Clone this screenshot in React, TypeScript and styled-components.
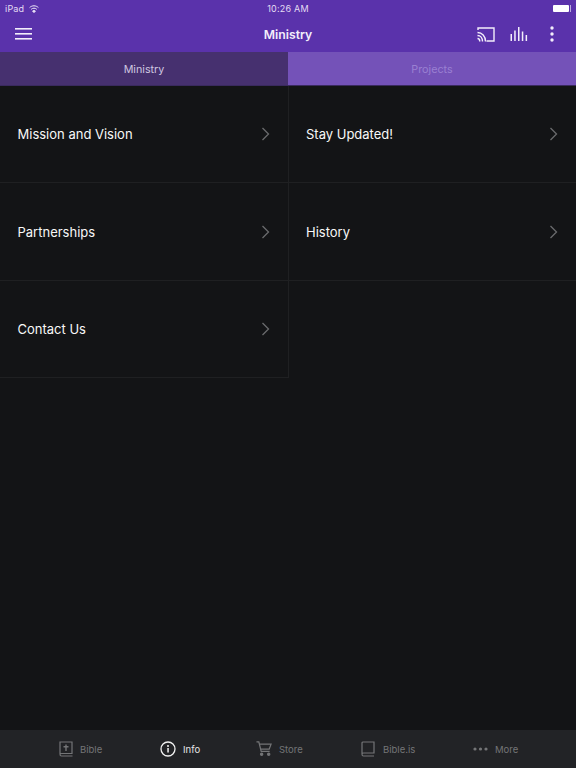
import { createGlobalStyle, styled } from 'styled-components';

const GlobalStyle = createGlobalStyle`
  html, body {
    margin: 0;
    padding: 0;
    background: #131416;
  }
  * {
    box-sizing: border-box;
  }
`;

const Page = styled.div`
  width: 576px;
  height: 768px;
  display: flex;
  flex-direction: column;
  overflow: hidden;
  background: #131416;
  color: #fff;
  font-family: Inter, 'Liberation Sans', sans-serif;
`;

const Header = styled.header`
  height: 52px;
  flex: none;
  background: #5a32ab;
  display: flex;
  flex-direction: column;
`;

const StatusBar = styled.div`
  height: 16px;
  padding: 1px 5px 0 5px;
  display: grid;
  grid-template-columns: 1fr auto 1fr;
  align-items: center;
  font-size: 9px;
  letter-spacing: 0.2px;
  color: #e4dcf3;
`;

const Carrier = styled.div`
  display: flex;
  align-items: center;
  gap: 5px;
`;

const Battery = styled.div`
  justify-self: end;
  width: 18px;
  height: 7px;
  border-right: 1px solid #b9a9de;
  padding-right: 1px;
  display: flex;
`;

const BatteryFill = styled.div`
  flex: 1;
  background: #fff;
  border-radius: 1px;
`;

const NavBar = styled.div`
  flex: 1;
  display: grid;
  grid-template-columns: 1fr auto 1fr;
  align-items: center;
  padding: 0 15px;
`;

const Title = styled.h1`
  margin: 0;
  font-size: 12.25px;
  font-weight: 600;
  color: #f3eefb;
`;

const NavActions = styled.div`
  justify-self: end;
  display: flex;
  align-items: center;
  gap: 15px;
`;

const Tabs = styled.div`
  height: 34px;
  flex: none;
  display: grid;
  grid-template-columns: 1fr 1fr;
`;

const Tab = styled.div<{ $active?: boolean }>`
  display: flex;
  align-items: center;
  justify-content: center;
  padding-top: 1px;
  font-size: 10.75px;
  background: ${(p) => (p.$active ? '#46306f' : '#7452b8')};
  color: ${(p) => (p.$active ? '#cfc6e0' : '#9a80d2')};
  border-bottom: 1px solid #3a2a5e;
`;

const Grid = styled.div`
  flex: 1;
  display: grid;
  grid-template-columns: 289px 287px;
  grid-auto-rows: 97.4px;
  align-content: start;
`;

const Cell = styled.div`
  display: flex;
  align-items: center;
  justify-content: space-between;
  padding: 0 18px 0 17.5px;
  border-right: 1px solid #1f2022;
  border-bottom: 1px solid #1f2022;
  font-size: 13px;
  font-weight: 400;
  color: #f8f8f8;

  &:nth-child(2n) {
    border-right: none;
    padding-left: 17px;
  }
`;

const BottomBar = styled.nav`
  height: 38px;
  flex: none;
  background: #222326;
  display: flex;
  align-items: center;
  padding-left: 59px;
`;

const BarItem = styled.div<{ $active?: boolean; $width: number }>`
  width: ${(p) => p.$width}px;
  flex: none;
  display: flex;
  align-items: center;
  gap: 7px;
  font-size: 9.5px;
  color: ${(p) => (p.$active ? '#e6e6e6' : '#747577')};
`;

const Chevron = () => (
  <svg width="9" height="14" viewBox="0 0 9 14" fill="none" stroke="#6a6b6d" strokeWidth="1.3">
    <path d="M1.5 1 L7.5 7 L1.5 13" />
  </svg>
);

const Wifi = () => (
  <svg width="10" height="8" viewBox="0 0 10 8" fill="none" stroke="#f0ebf9" strokeWidth="1">
    <path d="M0.6 2.6 C3 0.2 7 0.2 9.4 2.6" />
    <path d="M2.2 4.3 C3.8 2.8 6.2 2.8 7.8 4.3" />
    <path d="M5 7.6 L3.6 6 C4.4 5.3 5.6 5.3 6.4 6 Z" fill="#f0ebf9" />
  </svg>
);

const Menu = () => (
  <svg width="18" height="14" viewBox="0 0 18 14" fill="#f3eefb">
    <rect y="1" width="17" height="1.6" />
    <rect y="6" width="17" height="1.6" />
    <rect y="11" width="17" height="1.6" />
  </svg>
);

const Cast = () => (
  <svg width="18" height="15" viewBox="0 0 18 15" fill="none" stroke="#f3eefb" strokeWidth="1.4">
    <path d="M1 3 V1 H17 V14 H9.5" />
    <path d="M0.5 5.5 C5 5.5 8.5 9 8.5 14.5" />
    <path d="M0.5 8.5 C3.5 8.5 5.5 11 5.5 14.5" />
    <path d="M0.5 11.5 C2 11.5 2.8 13 2.8 14.5" />
  </svg>
);

const Equalizer = () => (
  <svg width="18" height="14" viewBox="0 0 18 14" fill="#f3eefb">
    <rect x="0.5" y="7" width="1.5" height="7" />
    <rect x="4.2" y="3.5" width="1.5" height="10.5" />
    <rect x="8" y="0" width="1.5" height="14" />
    <rect x="11.8" y="4.5" width="1.5" height="9.5" />
    <rect x="15.6" y="8" width="1.5" height="6" />
  </svg>
);

const Dots = () => (
  <svg width="18" height="16" viewBox="0 0 18 16" fill="#f3eefb">
    <circle cx="9" cy="2" r="1.7" />
    <circle cx="9" cy="8" r="1.7" />
    <circle cx="9" cy="14" r="1.7" />
  </svg>
);

const BibleIcon = () => (
  <svg width="14" height="16" viewBox="0 0 14 16" fill="none" stroke="#747577" strokeWidth="1.2">
    <path d="M1 13 V1 H13 V12.5 H2.5 C1.5 12.5 1 13 1 13.5 C1 14.5 1.8 15 2.5 15 H13.5" />
    <path d="M7 3.5 V10 M4.5 5.8 H9.5" strokeWidth="1.4" />
  </svg>
);

const InfoIcon = () => (
  <svg width="16" height="16" viewBox="0 0 16 16" fill="none">
    <circle cx="8" cy="8" r="7" stroke="#f2f2f2" strokeWidth="1.3" />
    <rect x="7.3" y="7" width="1.5" height="4.5" fill="#f2f2f2" />
    <circle cx="8" cy="5" r="1" fill="#f2f2f2" />
  </svg>
);

const CartIcon = () => (
  <svg width="16" height="16" viewBox="0 0 17 17" fill="none" stroke="#747577" strokeWidth="1.3">
    <path d="M0.5 1 H3 L5.5 11 H14.5" />
    <path d="M3.6 3.3 H16 L14 8.7 H5" />
    <circle cx="6" cy="14" r="1.2" fill="#747577" />
    <circle cx="13.5" cy="14" r="1.2" fill="#747577" />
  </svg>
);

const BookIcon = () => (
  <svg width="15" height="16" viewBox="0 0 15 16" fill="none" stroke="#747577" strokeWidth="1.2">
    <path d="M1 13 V2 C1 1.3 1.5 1 2 1 H13 V12 H2.5 C1.5 12 1 12.6 1 13.2 C1 14.3 1.8 15 2.5 15 H13" />
  </svg>
);

const MoreIcon = () => (
  <svg width="15" height="4" viewBox="0 0 15 4" fill="#747577">
    <circle cx="2" cy="2" r="1.6" />
    <circle cx="7.5" cy="2" r="1.6" />
    <circle cx="13" cy="2" r="1.6" />
  </svg>
);

const links = ['Mission and Vision', 'Stay Updated!', 'Partnerships', 'History', 'Contact Us'];

export default function App() {
  return (
    <Page>
      <GlobalStyle />
      <Header>
        <StatusBar>
          <Carrier>
            iPad <Wifi />
          </Carrier>
          <span>10:26 AM</span>
          <Battery>
            <BatteryFill />
          </Battery>
        </StatusBar>
        <NavBar>
          <Menu />
          <Title>Ministry</Title>
          <NavActions>
            <Cast />
            <Equalizer />
            <Dots />
          </NavActions>
        </NavBar>
      </Header>
      <Tabs>
        <Tab $active>Ministry</Tab>
        <Tab>Projects</Tab>
      </Tabs>
      <Grid>
        {links.map((link) => (
          <Cell key={link}>
            {link}
            <Chevron />
          </Cell>
        ))}
      </Grid>
      <BottomBar>
        <BarItem $width={101}>
          <BibleIcon />
          Bible
        </BarItem>
        <BarItem $width={96} $active>
          <InfoIcon />
          Info
        </BarItem>
        <BarItem $width={105}>
          <CartIcon />
          Store
        </BarItem>
        <BarItem $width={112}>
          <BookIcon />
          Bible.is
        </BarItem>
        <BarItem $width={60}>
          <MoreIcon />
          More
        </BarItem>
      </BottomBar>
    </Page>
  );
}
